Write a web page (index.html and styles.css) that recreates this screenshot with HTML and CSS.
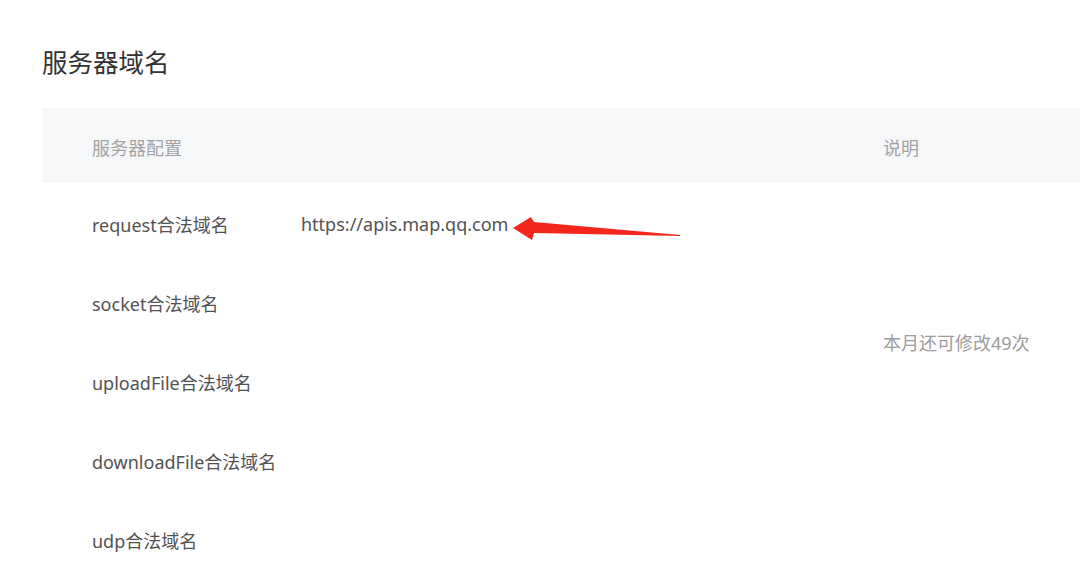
FILE: index.html
```html
<!DOCTYPE html>
<html lang="zh-CN">
<head>
<meta charset="utf-8">
<title>服务器域名</title>
<link rel="stylesheet" href="styles.css">
</head>
<body>
<div class="page">
  <h1 class="title">服务器域名</h1>
  <div class="table">
    <div class="thead">
      <div class="th">服务器配置</div>
      <div class="th"></div>
      <div class="th">说明</div>
    </div>
    <div class="tbody">
      <div class="cell label r1">request合法域名</div>
      <div class="cell value r1">https://apis.map.qq.com</div>
      <div class="cell label r2">socket合法域名</div>
      <div class="cell label r3">uploadFile合法域名</div>
      <div class="cell label r4">downloadFile合法域名</div>
      <div class="cell label r5">udp合法域名</div>
      <div class="cell desc">本月还可修改49次</div>
    </div>
    <svg class="arrow" width="172" height="26" viewBox="0 0 172 26" aria-hidden="true">
      <polygon points="1,12 19,1 22,6 168,19 168,20 22,17 20,24" fill="#f4261c"/>
    </svg>
  </div>
</div>
</body>
</html>
```

FILE: styles.css
```css
html, body {
  margin: 0;
  padding: 0;
  background: #ffffff;
  overflow: hidden;
}
body {
  font-family: "Noto Sans", "Noto Sans CJK SC", sans-serif;
  width: 1080px;
  height: 578px;
}
.page {
  padding-left: 42px;
  padding-top: 44px;
}
.title {
  margin: 0;
  font-size: 25.5px;
  font-weight: 400;
  color: #333333;
  line-height: 36px;
  height: 64px;
}
.table {
  position: relative;
}
.thead,
.tbody {
  display: grid;
  grid-template-columns: 209px 582px 1fr;
  padding-left: 50px;
}
.thead {
  background: #f6f7f9;
  height: 75px;
  align-items: center;
}
.th {
  font-size: 18px;
  color: #a3a3a3;
  padding-top: 2px;
}
.tbody {
  grid-template-rows: repeat(5, 79px);
}
.cell {
  display: flex;
  align-items: center;
  padding-top: 2px;
  font-size: 18px;
  color: #525252;
}
.label { grid-column: 1; }
.value { grid-column: 2; }
.r1 { grid-row: 1; }
.r2 { grid-row: 2; }
.r3 { grid-row: 3; }
.r4 { grid-row: 4; }
.r5 { grid-row: 5; }
.desc {
  grid-column: 3;
  grid-row: 1 / 5;
  color: #9c9c9c;
}
.arrow {
  position: absolute;
  left: 470px;
  top: 108px;
}
```
